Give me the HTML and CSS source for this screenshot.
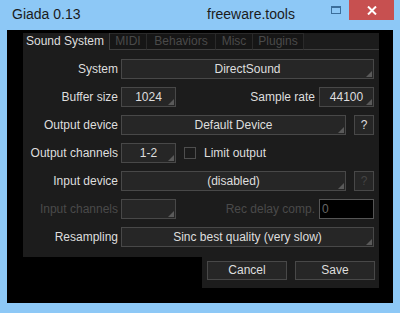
FILE: index.html
```html
<!DOCTYPE html>
<html lang="en">

<head>
    <meta charset="UTF-8">
    <title>Giada 0.13</title>
    <link rel="stylesheet" href="styles.css">
</head>

<body>
    <div class="window">
        <div class="titlebar">
            <span class="title">Giada 0.13</span>
            <span class="site">freeware.tools</span>
            <div class="controls">
                <div class="max"><span class="max-icon"></span></div>
                <div class="close">
                    <svg width="10" height="9" viewBox="0 0 10 9">
                        <path d="M1 0.5 L9 8.5 M9 0.5 L1 8.5" stroke="#fff" stroke-width="2" fill="none"/>
                    </svg>
                </div>
            </div>
        </div>

        <div class="client">
            <div class="panel">
                <div class="tabs">
                    <div class="tab active">Sound System</div>
                    <div class="tab t-midi">MIDI</div>
                    <div class="tab t-beh">Behaviors</div>
                    <div class="tab t-misc">Misc</div>
                    <div class="tab t-plug">Plugins</div>
                    <div class="tab-fill"></div>
                </div>

                <div class="body">
                    <div class="row">
                        <span class="label">System</span>
                        <div class="field wide">DirectSound</div>
                    </div>
                    <div class="row">
                        <span class="label">Buffer size</span>
                        <div class="field short">1024</div>
                        <span class="label-right">Sample rate</span>
                        <div class="field short">44100</div>
                    </div>
                    <div class="row">
                        <span class="label">Output device</span>
                        <div class="field mid">Default Device</div>
                        <div class="help">?</div>
                    </div>
                    <div class="row">
                        <span class="label">Output channels</span>
                        <div class="field short">1-2</div>
                        <span class="check"></span>
                        <span class="check-label">Limit output</span>
                    </div>
                    <div class="row">
                        <span class="label">Input device</span>
                        <div class="field mid">(disabled)</div>
                        <div class="help off">?</div>
                    </div>
                    <div class="row">
                        <span class="label off">Input channels</span>
                        <div class="field short"></div>
                        <span class="label-right off">Rec delay comp.</span>
                        <div class="input">0</div>
                    </div>
                    <div class="row">
                        <span class="label">Resampling</span>
                        <div class="field wide">Sinc best quality (very slow)</div>
                    </div>
                </div>
            </div>

            <div class="footer">
                <div class="buttons">
                    <div class="button">Cancel</div>
                    <div class="button">Save</div>
                </div>
            </div>
        </div>
    </div>
</body>

</html>
```

FILE: styles.css
```css
html {
font-family: "Liberation Sans", Arial, sans-serif;
}

body {
margin: 0;
width: 400px;
height: 313px;
background-color: #8dc8f6;
overflow: hidden;
}

.titlebar {
display: flex;
align-items: flex-start;
height: 30px;
color: #1b1b1b;
font-size: 14px;
}

.title {
width: 195px;
padding-left: 12px;
line-height: 29px;
}

.site {
line-height: 29px;
}

.controls {
display: flex;
margin-left: auto;
padding-right: 6px;
}

.max {
width: 26px;
height: 20px;
display: flex;
align-items: center;
justify-content: center;
}

.max-icon {
width: 8px;
height: 5px;
border: 1px solid #3b6e9b;
border-top-width: 2px;
margin-top: -1px;
margin-left: -1px;
}

.close {
width: 45px;
height: 20px;
background-color: #c75050;
display: flex;
align-items: center;
justify-content: center;
}

.client {
margin: 0 7px;
height: 273px;
box-sizing: border-box;
background-color: #000;
padding: 3px 14px 0 16px;
}

.panel {
background-color: #1c1c1c;
height: 224px;
color: #dedede;
font-size: 12px;
}

.tabs {
display: flex;
height: 17px;
}

.tab {
box-sizing: border-box;
height: 17px;
line-height: 15px;
text-align: center;
color: #4a4a4a;
background-color: #161616;
border: 1px solid #2a2a2a;
border-bottom-color: #3e3e3e;
border-left: none;
}

.tab.active {
width: 87px;
text-align: left;
padding-left: 3px;
color: #dedede;
background-color: #1c1c1c;
border: none;
border-right: 1px solid #3e3e3e;
line-height: 17px;
}

.t-midi { width: 37px; }
.t-beh { width: 69px; }
.t-misc { width: 37px; }
.t-plug { width: 51px; }

.tab-fill {
flex: 1;
border-bottom: 1px solid #3e3e3e;
}

.body {
padding: 9px 5px 0 0;
}

.row {
display: flex;
align-items: center;
height: 20px;
margin-bottom: 8px;
}

.label {
width: 95px;
margin-right: 3px;
text-align: right;
white-space: nowrap;
}

.label-right {
flex: 1;
text-align: right;
margin-right: 4px;
white-space: nowrap;
}

.off {
color: #4a4a4a;
}

.field {
position: relative;
box-sizing: border-box;
height: 20px;
line-height: 18px;
background-color: #262626;
border: 1px solid #484848;
text-align: center;
}

.field::after {
content: "";
position: absolute;
right: 1px;
bottom: 1px;
width: 0;
height: 0;
border-left: 6px solid transparent;
border-bottom: 6px solid #5a5a5a;
}

.wide { width: 253px; }
.mid { width: 225px; }
.short { width: 55px; }

.help {
box-sizing: border-box;
width: 20px;
height: 20px;
line-height: 18px;
margin-left: 8px;
text-align: center;
background-color: #262626;
border: 1px solid #484848;
}

.help.off {
color: #444;
}

.check {
box-sizing: border-box;
width: 12px;
height: 12px;
margin-left: 8px;
border: 1px solid #4e4e4e;
background-color: #1c1c1c;
}

.check-label {
margin-left: 8px;
}

.input {
box-sizing: border-box;
width: 55px;
height: 20px;
line-height: 18px;
padding-left: 2px;
background-color: #000;
border: 1px solid #555;
color: #666;
}

.footer {
display: flex;
justify-content: flex-end;
}

.buttons {
display: flex;
gap: 8px;
width: 177px;
height: 31px;
box-sizing: border-box;
padding: 4px 0 0 5px;
background-color: #1c1c1c;
}

.button {
box-sizing: border-box;
width: 80px;
height: 19px;
line-height: 17px;
text-align: center;
color: #dedede;
font-size: 12px;
background-color: #262626;
border: 1px solid #484848;
}
```
